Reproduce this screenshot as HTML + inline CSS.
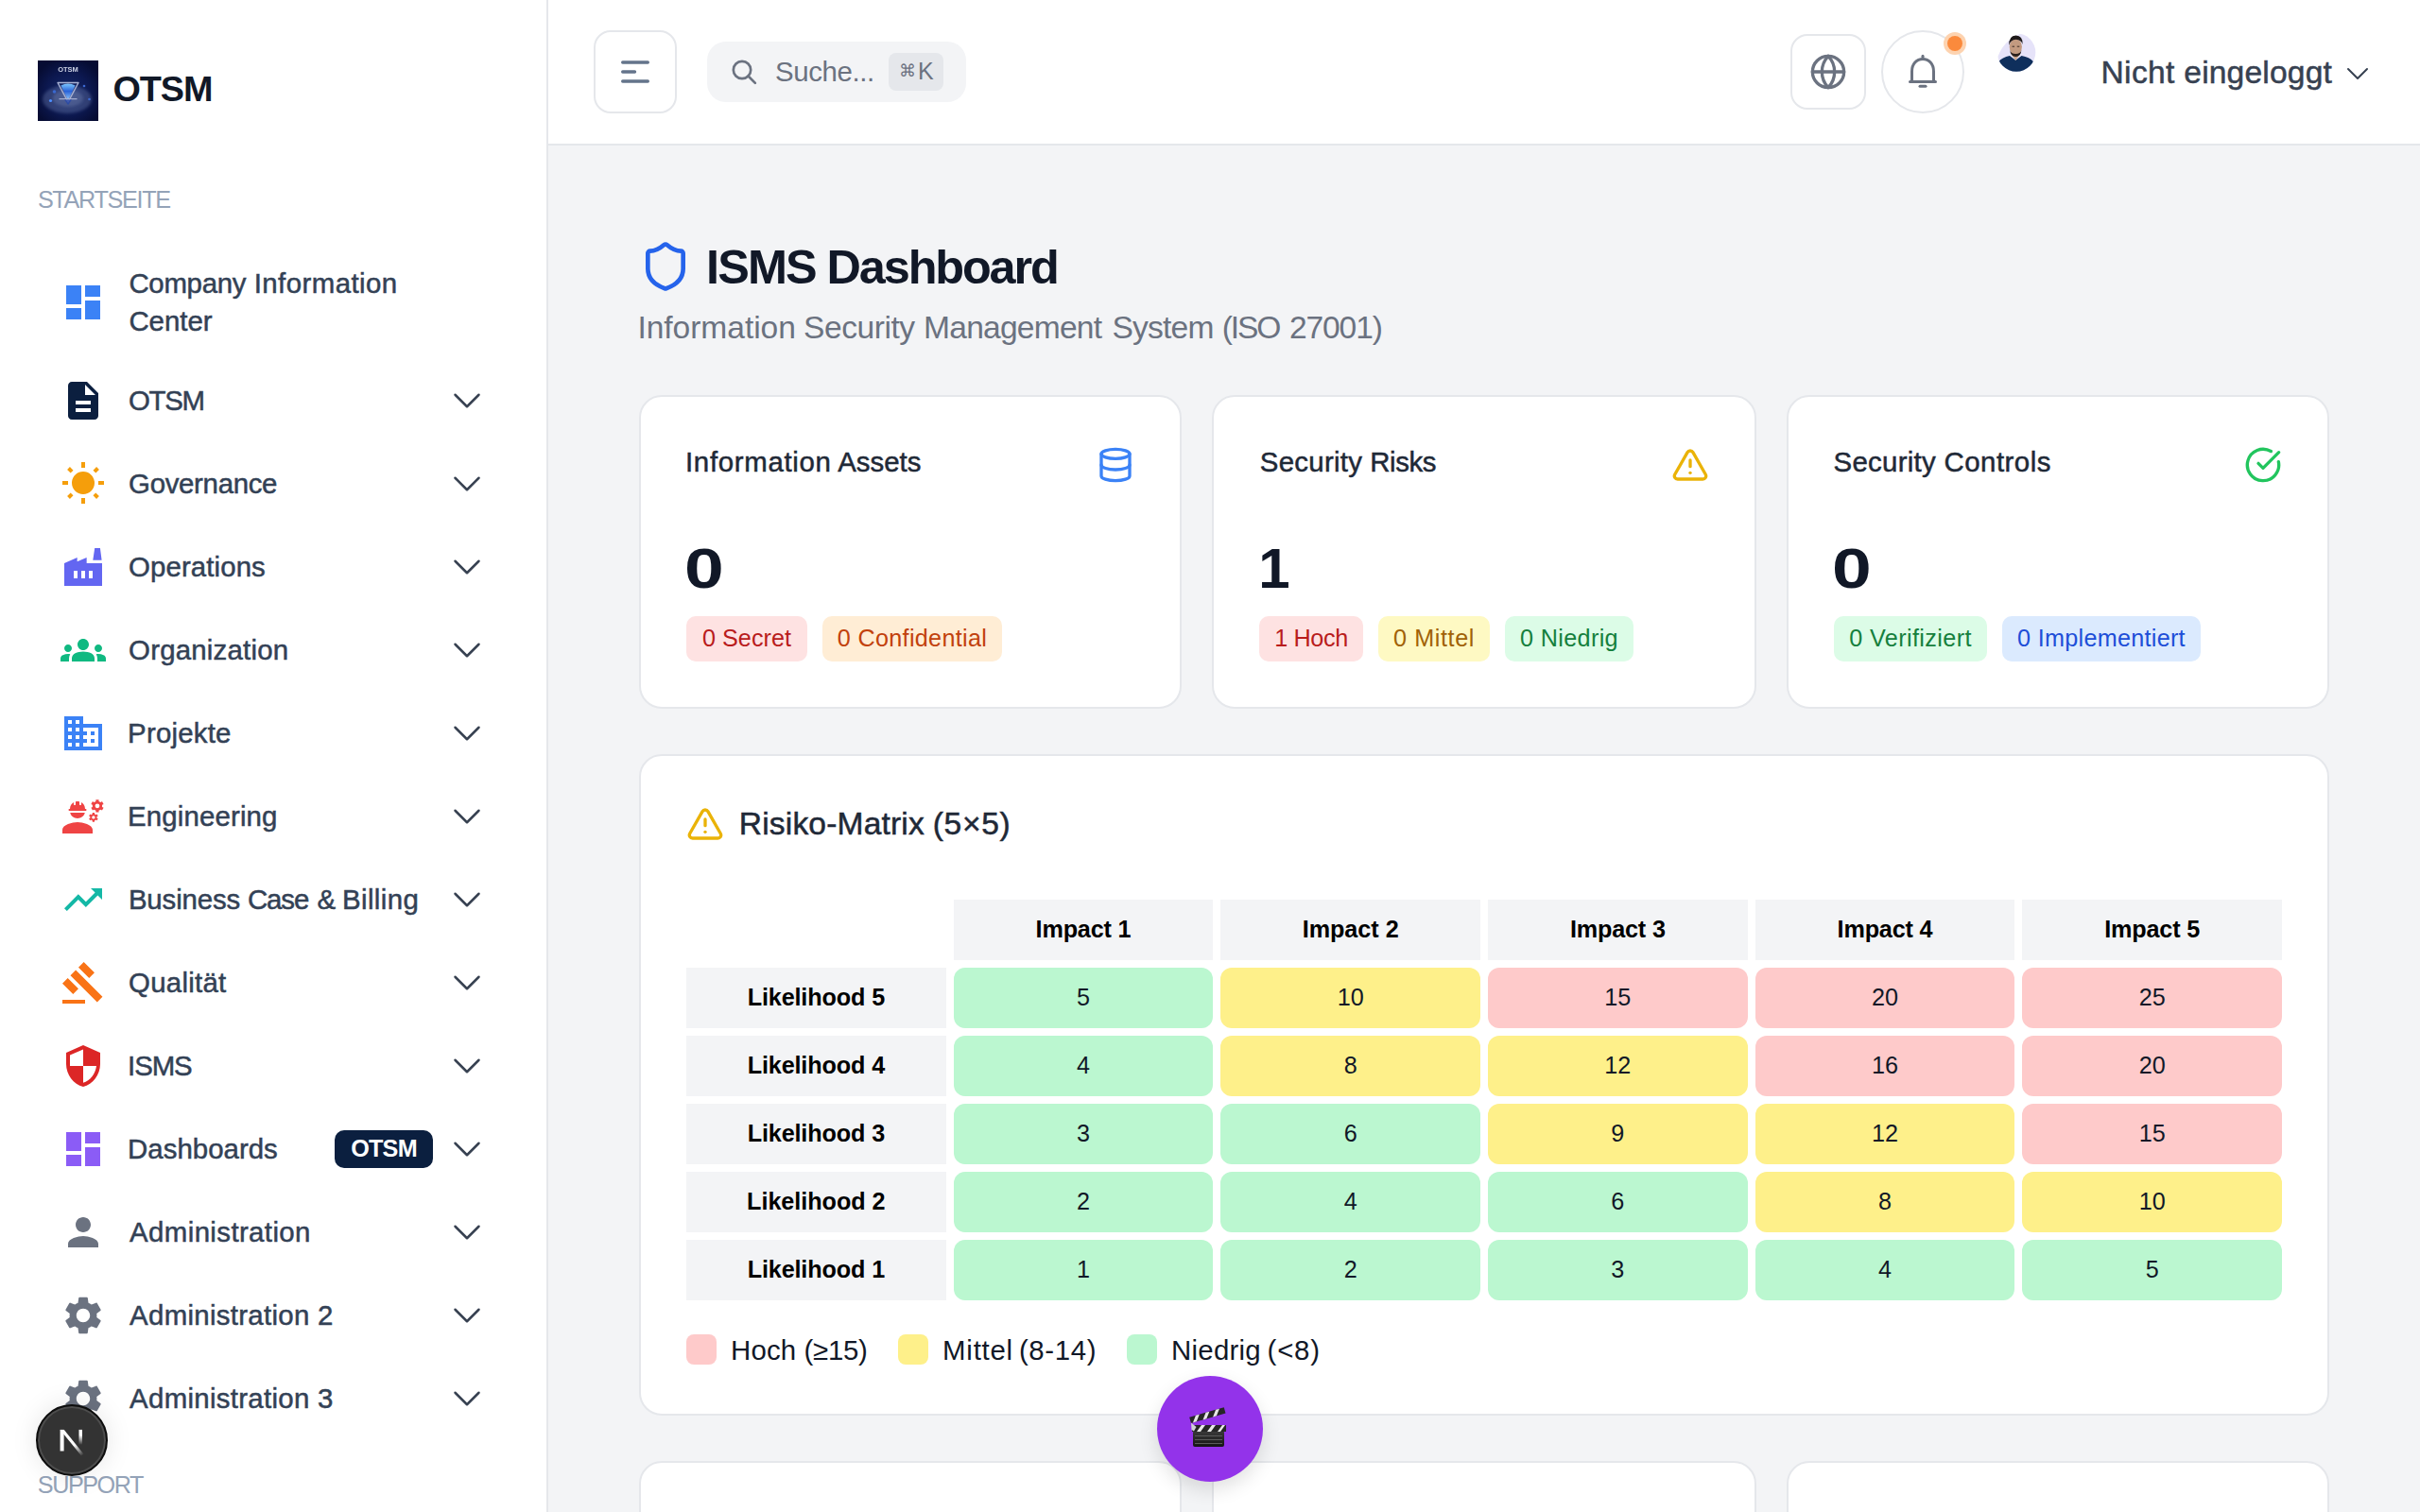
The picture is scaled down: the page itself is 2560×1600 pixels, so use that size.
<!DOCTYPE html>
<html><head><meta charset="utf-8">
<style>
*{box-sizing:border-box;margin:0;padding:0}
html,body{width:2560px;height:1600px;overflow:hidden;background:#f3f4f6;font-family:"Liberation Sans",sans-serif;}
.abs{position:absolute}
.t{position:absolute;white-space:nowrap;line-height:1}
.card{position:absolute;background:#fff;border:2px solid #e5e7eb;border-radius:24px}
.bd{position:absolute;height:48px;border-radius:10px}
.cell{position:absolute;height:64px}
</style></head><body>

<div class="abs" style="left:0;top:0;width:580px;height:1600px;background:#fff;border-right:2px solid #e5e7eb"></div>
<svg class="abs" style="left:40px;top:64px" width="64" height="64" viewBox="0 0 64 64">
<defs>
<radialGradient id="lg" cx="50%" cy="55%" r="60%"><stop offset="0" stop-color="#15286a"/><stop offset="0.6" stop-color="#0c1850"/><stop offset="1" stop-color="#060c33"/></radialGradient>
<linearGradient id="lv" x1="0" y1="0" x2="0" y2="1"><stop offset="0" stop-color="#7cc8ff"/><stop offset="0.45" stop-color="#2a63d8"/><stop offset="1" stop-color="#9cd2ff"/></linearGradient>
<filter id="bl" x="-20%" y="-20%" width="140%" height="140%"><feGaussianBlur stdDeviation="1.6"/></filter>
<filter id="bl2"><feGaussianBlur stdDeviation="0.5"/></filter>
</defs>
<rect width="64" height="64" fill="url(#lg)"/>
<ellipse cx="31" cy="41" rx="26" ry="15" fill="#7d8fbd" opacity="0.32" filter="url(#bl)"/>
<ellipse cx="32" cy="40" rx="16" ry="9" fill="#9aaad0" opacity="0.22" filter="url(#bl)"/>
<g filter="url(#bl2)">
<text x="32" y="11.5" font-size="7.5" fill="#c9cfe2" text-anchor="middle" font-family="Liberation Sans" font-weight="bold">OTSM</text>
<path d="M24.5 26.5 Q32 22.5 39.5 26.5 L32 42.5 Z" fill="url(#lv)"/>
<path d="M21 23.5 L43 23.5 L32 44 Z" fill="none" stroke="#a9b2d4" stroke-width="1.4" stroke-linejoin="round"/>
<path d="M22.5 40.7 L41.5 40.7" stroke="#a9b2d4" stroke-width="1.2"/><path d="M28 41.5 L36 41.5 L32 47Z" fill="#2446a8" opacity="0.8"/>
<circle cx="13.5" cy="42.5" r="1.6" fill="#4d8fff"/>
<circle cx="17.5" cy="33" r="1.8" fill="#3a68d0"/>
<circle cx="49" cy="27" r="1.3" fill="#3a68d0"/>
<circle cx="54.5" cy="41" r="1.3" fill="#3a68d0"/>
</g>
</svg>
<div class="t" style="left:119.40px;top:75.99px;font-size:37.8px;color:#111827;font-weight:bold;letter-spacing:-1.033px;">OTSM</div>
<div class="t" style="left:39.90px;top:198.96px;font-size:25.2px;color:#94a3b8;letter-spacing:-1.324px;">STARTSEITE</div>
<div class="t" style="left:136.40px;top:285.11px;font-size:29.4px;color:#334155;letter-spacing:-0.282px;-webkit-text-stroke:0.5px #334155;">Company</div>
<div class="t" style="left:268.70px;top:285.11px;font-size:29.4px;color:#334155;letter-spacing:0.442px;-webkit-text-stroke:0.5px #334155;">Information</div>
<div class="t" style="left:136.40px;top:325.11px;font-size:29.4px;color:#334155;letter-spacing:-0.006px;-webkit-text-stroke:0.5px #334155;">Center</div>
<div class="t" style="left:136.10px;top:409.11px;font-size:29.4px;color:#334155;letter-spacing:-1.372px;-webkit-text-stroke:0.5px #334155;">OTSM</div>
<div class="t" style="left:136.10px;top:497.11px;font-size:29.4px;color:#334155;letter-spacing:-0.307px;-webkit-text-stroke:0.5px #334155;">Governance</div>
<div class="t" style="left:136.10px;top:585.11px;font-size:29.4px;color:#334155;letter-spacing:0.103px;-webkit-text-stroke:0.5px #334155;">Operations</div>
<div class="t" style="left:136.10px;top:673.11px;font-size:29.4px;color:#334155;letter-spacing:0.209px;-webkit-text-stroke:0.5px #334155;">Organization</div>
<div class="t" style="left:135.10px;top:761.11px;font-size:29.4px;color:#334155;letter-spacing:0.218px;-webkit-text-stroke:0.5px #334155;">Projekte</div>
<div class="t" style="left:135.10px;top:849.11px;font-size:29.4px;color:#334155;letter-spacing:0.148px;-webkit-text-stroke:0.5px #334155;">Engineering</div>
<div class="t" style="left:135.90px;top:937.11px;font-size:29.4px;color:#334155;letter-spacing:-0.123px;-webkit-text-stroke:0.5px #334155;">Business</div>
<div class="t" style="left:261.90px;top:937.11px;font-size:29.4px;color:#334155;letter-spacing:-1.055px;-webkit-text-stroke:0.5px #334155;">Case</div>
<div class="t" style="left:335.50px;top:937.11px;font-size:29.4px;color:#334155;-webkit-text-stroke:0.5px #334155;">&amp;</div>
<div class="t" style="left:362.00px;top:937.11px;font-size:29.4px;color:#334155;letter-spacing:0.389px;-webkit-text-stroke:0.5px #334155;">Billing</div>
<div class="t" style="left:136.10px;top:1025.11px;font-size:29.4px;color:#334155;letter-spacing:0.268px;-webkit-text-stroke:0.5px #334155;">Qualität</div>
<div class="t" style="left:135.10px;top:1113.11px;font-size:29.4px;color:#334155;letter-spacing:-1.084px;-webkit-text-stroke:0.5px #334155;">ISMS</div>
<div class="t" style="left:135.10px;top:1201.11px;font-size:29.4px;color:#334155;letter-spacing:0.024px;-webkit-text-stroke:0.5px #334155;">Dashboards</div>
<div class="t" style="left:137.10px;top:1289.11px;font-size:29.4px;color:#334155;letter-spacing:0.394px;-webkit-text-stroke:0.5px #334155;">Administration</div>
<div class="t" style="left:137.10px;top:1377.11px;font-size:29.4px;color:#334155;letter-spacing:0.308px;-webkit-text-stroke:0.5px #334155;">Administration 2</div>
<div class="t" style="left:137.10px;top:1465.11px;font-size:29.4px;color:#334155;letter-spacing:0.308px;-webkit-text-stroke:0.5px #334155;">Administration 3</div>
<svg class="abs" style="left:474px;top:404px;" width="40" height="40" viewBox="0 0 24 24"><path d="m19.5 8.25-7.5 7.5-7.5-7.5" fill="none" stroke="#374151" stroke-width="1.5" stroke-linecap="round" stroke-linejoin="round"/></svg>
<svg class="abs" style="left:474px;top:492px;" width="40" height="40" viewBox="0 0 24 24"><path d="m19.5 8.25-7.5 7.5-7.5-7.5" fill="none" stroke="#374151" stroke-width="1.5" stroke-linecap="round" stroke-linejoin="round"/></svg>
<svg class="abs" style="left:474px;top:580px;" width="40" height="40" viewBox="0 0 24 24"><path d="m19.5 8.25-7.5 7.5-7.5-7.5" fill="none" stroke="#374151" stroke-width="1.5" stroke-linecap="round" stroke-linejoin="round"/></svg>
<svg class="abs" style="left:474px;top:668px;" width="40" height="40" viewBox="0 0 24 24"><path d="m19.5 8.25-7.5 7.5-7.5-7.5" fill="none" stroke="#374151" stroke-width="1.5" stroke-linecap="round" stroke-linejoin="round"/></svg>
<svg class="abs" style="left:474px;top:756px;" width="40" height="40" viewBox="0 0 24 24"><path d="m19.5 8.25-7.5 7.5-7.5-7.5" fill="none" stroke="#374151" stroke-width="1.5" stroke-linecap="round" stroke-linejoin="round"/></svg>
<svg class="abs" style="left:474px;top:844px;" width="40" height="40" viewBox="0 0 24 24"><path d="m19.5 8.25-7.5 7.5-7.5-7.5" fill="none" stroke="#374151" stroke-width="1.5" stroke-linecap="round" stroke-linejoin="round"/></svg>
<svg class="abs" style="left:474px;top:932px;" width="40" height="40" viewBox="0 0 24 24"><path d="m19.5 8.25-7.5 7.5-7.5-7.5" fill="none" stroke="#374151" stroke-width="1.5" stroke-linecap="round" stroke-linejoin="round"/></svg>
<svg class="abs" style="left:474px;top:1020px;" width="40" height="40" viewBox="0 0 24 24"><path d="m19.5 8.25-7.5 7.5-7.5-7.5" fill="none" stroke="#374151" stroke-width="1.5" stroke-linecap="round" stroke-linejoin="round"/></svg>
<svg class="abs" style="left:474px;top:1108px;" width="40" height="40" viewBox="0 0 24 24"><path d="m19.5 8.25-7.5 7.5-7.5-7.5" fill="none" stroke="#374151" stroke-width="1.5" stroke-linecap="round" stroke-linejoin="round"/></svg>
<svg class="abs" style="left:474px;top:1196px;" width="40" height="40" viewBox="0 0 24 24"><path d="m19.5 8.25-7.5 7.5-7.5-7.5" fill="none" stroke="#374151" stroke-width="1.5" stroke-linecap="round" stroke-linejoin="round"/></svg>
<svg class="abs" style="left:474px;top:1284px;" width="40" height="40" viewBox="0 0 24 24"><path d="m19.5 8.25-7.5 7.5-7.5-7.5" fill="none" stroke="#374151" stroke-width="1.5" stroke-linecap="round" stroke-linejoin="round"/></svg>
<svg class="abs" style="left:474px;top:1372px;" width="40" height="40" viewBox="0 0 24 24"><path d="m19.5 8.25-7.5 7.5-7.5-7.5" fill="none" stroke="#374151" stroke-width="1.5" stroke-linecap="round" stroke-linejoin="round"/></svg>
<svg class="abs" style="left:474px;top:1460px;" width="40" height="40" viewBox="0 0 24 24"><path d="m19.5 8.25-7.5 7.5-7.5-7.5" fill="none" stroke="#374151" stroke-width="1.5" stroke-linecap="round" stroke-linejoin="round"/></svg>
<svg class="abs" style="left:64px;top:296px;" width="48" height="48" viewBox="0 0 24 24"><path d="M3 13h8V3H3v10zm0 8h8v-6H3v6zm10 0h8V11h-8v10zm0-18v6h8V3h-8z" fill="#3b82f6" /></svg>
<svg class="abs" style="left:64px;top:400px;" width="48" height="48" viewBox="0 0 24 24"><path d="M14 2H6c-1.1 0-1.99.9-1.99 2L4 20c0 1.1.89 2 1.99 2H18c1.1 0 2-.9 2-2V8l-6-6zm2 16H8v-2h8v2zm0-4H8v-2h8v2zm-3-5V3.5L18.5 9H13z" fill="#0b1f3f" /></svg>
<svg class="abs" style="left:64px;top:488px;" width="48" height="48" viewBox="0 0 24 24"><path d="M6.76 4.84l-1.8-1.79-1.41 1.41 1.79 1.79 1.42-1.41zM4 10.5H1v2h3v-2zm9-9.95h-2V3.5h2V.55zm7.45 3.91l-1.41-1.41-1.79 1.79 1.41 1.41 1.79-1.79zm-3.21 13.7l1.79 1.8 1.41-1.41-1.8-1.79-1.4 1.4zM20 10.5v2h3v-2h-3zm-8-5c-3.31 0-6 2.69-6 6s2.69 6 6 6 6-2.69 6-6-2.69-6-6-6zm-1 16.95h2V19.5h-2v2.95zm-7.45-3.91l1.41 1.41 1.79-1.8-1.41-1.41-1.79 1.8z" fill="#f59e0b" /></svg>
<svg class="abs" style="left:64px;top:576px;" width="48" height="48" viewBox="0 0 24 24"><path d="M2 22V10l6.83-3v2.1l5-2.1V10H22V22z M7 14h2v4H7z M11 14h2v4h-2z M15 14h2v4h-2z M18.1 2h2.86l.84 6.35h-4.65z" fill="#6366f1" fill-rule="evenodd"/></svg>
<svg class="abs" style="left:64px;top:664px;" width="48" height="48" viewBox="0 0 24 24"><path d="M12 12.75c1.63 0 3.07.39 4.24.9 1.08.48 1.76 1.56 1.76 2.73V18H6v-1.61c0-1.18.68-2.26 1.76-2.73 1.17-.52 2.61-.91 4.24-.91zM4 13c1.1 0 2-.9 2-2s-.9-2-2-2-2 .9-2 2 .9 2 2 2zm1.13 1.1c-.37-.06-.74-.1-1.13-.1-.99 0-1.93.21-2.78.58C.48 14.9 0 15.62 0 16.43V18h4.5v-1.61c0-.83.23-1.61.63-2.29zM20 13c1.1 0 2-.9 2-2s-.9-2-2-2-2 .9-2 2 .9 2 2 2zm4 3.43c0-.81-.48-1.53-1.22-1.85-.85-.37-1.79-.58-2.78-.58-.39 0-.76.04-1.13.1.4.68.63 1.46.63 2.29V18H24v-1.57zM12 6c1.66 0 3 1.34 3 3s-1.34 3-3 3-3-1.34-3-3 1.34-3 3-3z" fill="#10b981" /></svg>
<svg class="abs" style="left:64px;top:752px;" width="48" height="48" viewBox="0 0 24 24"><path d="M12 7V3H2v18h20V7H12zM6 19H4v-2h2v2zm0-4H4v-2h2v2zm0-4H4V9h2v2zm0-4H4V5h2v2zm4 12H8v-2h2v2zm0-4H8v-2h2v2zm0-4H8V9h2v2zm0-4H8V5h2v2zm10 12h-8v-2h2v-2h-2v-2h2v-2h-2V9h8v10zm-2-8h-2v2h2v-2zm0 4h-2v2h2v-2z" fill="#3b82f6" /></svg>
<svg class="abs" style="left:64px;top:840px;" width="48" height="48" viewBox="0 0 24 24"><path d="M9 15c-2.67 0-8 1.34-8 4v2h16v-2c0-2.66-5.33-4-8-4z M4.74 8.95h8.52c.27 0 .49-.22.49-.49v-.02c0-.27-.22-.49-.49-.49H13c0-1.48-.81-2.75-2-3.45v.95c0 .28-.22.5-.5.5s-.5-.22-.5-.5V4.14C9.68 4.06 9.35 4 9 4s-.68.06-1 .14V5.5c0 .28-.22.5-.5.5S7 5.78 7 5.5v-.95C5.81 5.25 5 6.52 5 8h-.26c-.27 0-.49.22-.49.49v.03c0 .26.22.48.49.48z M5.1 10h7.8c-.4 1.75-2 2.95-3.9 2.95s-3.5-1.2-3.9-2.95z M18.73 3.94 L18.67 3.08 L20.29 3.08 L20.23 3.94 L21.26 4.53 L21.98 4.06 L22.79 5.45 L22.01 5.84 L22.01 7.02 L22.79 7.41 L21.98 8.80 L21.26 8.33 L20.23 8.92 L20.29 9.78 L18.67 9.78 L18.73 8.92 L17.70 8.33 L16.98 8.80 L16.17 7.41 L16.95 7.02 L16.95 5.84 L16.17 5.45 L16.98 4.06 L17.70 4.53Z M20.68 6.43 A1.2 1.2 0 1 0 18.28 6.43 A1.2 1.2 0 1 0 20.68 6.43Z M16.91 10.68 L16.87 10.02 L18.03 10.02 L17.99 10.68 L18.71 11.10 L19.26 10.73 L19.85 11.74 L19.25 12.03 L19.25 12.87 L19.85 13.16 L19.26 14.17 L18.71 13.80 L17.99 14.22 L18.03 14.88 L16.87 14.88 L16.91 14.22 L16.19 13.80 L15.64 14.17 L15.05 13.16 L15.65 12.87 L15.65 12.03 L15.05 11.74 L15.64 10.73 L16.19 11.10Z M18.30 12.45 A0.85 0.85 0 1 0 16.60 12.45 A0.85 0.85 0 1 0 18.30 12.45Z" fill="#ef4444" fill-rule="evenodd"/></svg>
<svg class="abs" style="left:64px;top:928px;" width="48" height="48" viewBox="0 0 24 24"><path d="M16 6l2.29 2.29-4.88 4.88-4-4L2 16.59 3.41 18l6-6 4 4 6.3-6.29L22 12V6z" fill="#14b8a6" /></svg>
<svg class="abs" style="left:64px;top:1016px;" width="48" height="48" viewBox="0 0 24 24"><path d="M1 21h12v2H1zM5.245 8.07l2.83-2.827 14.14 14.142-2.828 2.828zM12.317 1l5.657 5.656-2.83 2.83-5.654-5.66zM3.825 9.485l5.657 5.657-2.828 2.828-5.657-5.657z" fill="#f97316" /></svg>
<svg class="abs" style="left:64px;top:1104px;" width="48" height="48" viewBox="0 0 24 24"><path d="M12 1L3 5v6c0 5.55 3.84 10.74 9 12 5.16-1.26 9-6.45 9-12V5l-9-4zm0 10.99h7c-.53 4.12-3.28 7.79-7 8.94V12H5V6.3l7-3.11v8.8z" fill="#dc2626" /></svg>
<svg class="abs" style="left:64px;top:1192px;" width="48" height="48" viewBox="0 0 24 24"><path d="M3 13h8V3H3v10zm0 8h8v-6H3v6zm10 0h8V11h-8v10zm0-18v6h8V3h-8z" fill="#8b5cf6" /></svg>
<svg class="abs" style="left:64px;top:1280px;" width="48" height="48" viewBox="0 0 24 24"><path d="M12 12c2.21 0 4-1.79 4-4s-1.79-4-4-4-4 1.79-4 4 1.79 4 4 4zm0 2c-2.67 0-8 1.34-8 4v2h16v-2c0-2.66-5.33-4-8-4z" fill="#6b7280" /></svg>
<svg class="abs" style="left:64px;top:1368px;" width="48" height="48" viewBox="0 0 24 24"><path d="M19.14 12.94c.04-.3.06-.61.06-.94 0-.32-.02-.64-.07-.94l2.03-1.58c.18-.14.23-.41.12-.61l-1.92-3.32c-.12-.22-.37-.29-.59-.22l-2.39.96c-.5-.38-1.03-.7-1.62-.94l-.36-2.54c-.04-.24-.24-.41-.48-.41h-3.84c-.24 0-.43.17-.47.41l-.36 2.54c-.59.24-1.13.57-1.62.94l-2.39-.96c-.22-.08-.47 0-.59.22L2.74 8.87c-.12.21-.08.47.12.61l2.03 1.58c-.05.3-.09.63-.09.94s.02.64.07.94l-2.03 1.58c-.18.14-.23.41-.12.61l1.92 3.32c.12.22.37.29.59.22l2.39-.96c.5.38 1.03.7 1.62.94l.36 2.54c.05.24.24.41.48.41h3.84c.24 0 .44-.17.47-.41l.36-2.54c.59-.24 1.13-.56 1.62-.94l2.39.96c.22.08.47 0 .59-.22l1.92-3.32c.12-.22.07-.47-.12-.61l-2.01-1.58zM12 15.6c-1.98 0-3.6-1.62-3.6-3.6s1.62-3.6 3.6-3.6 3.6 1.62 3.6 3.6-1.62 3.6-3.6 3.6z" fill="#6b7280" /></svg>
<svg class="abs" style="left:64px;top:1456px;" width="48" height="48" viewBox="0 0 24 24"><path d="M19.14 12.94c.04-.3.06-.61.06-.94 0-.32-.02-.64-.07-.94l2.03-1.58c.18-.14.23-.41.12-.61l-1.92-3.32c-.12-.22-.37-.29-.59-.22l-2.39.96c-.5-.38-1.03-.7-1.62-.94l-.36-2.54c-.04-.24-.24-.41-.48-.41h-3.84c-.24 0-.43.17-.47.41l-.36 2.54c-.59.24-1.13.57-1.62.94l-2.39-.96c-.22-.08-.47 0-.59.22L2.74 8.87c-.12.21-.08.47.12.61l2.03 1.58c-.05.3-.09.63-.09.94s.02.64.07.94l-2.03 1.58c-.18.14-.23.41-.12.61l1.92 3.32c.12.22.37.29.59.22l2.39-.96c.5.38 1.03.7 1.62.94l.36 2.54c.05.24.24.41.48.41h3.84c.24 0 .44-.17.47-.41l.36-2.54c.59-.24 1.13-.56 1.62-.94l2.39.96c.22.08.47 0 .59-.22l1.92-3.32c.12-.22.07-.47-.12-.61l-2.01-1.58zM12 15.6c-1.98 0-3.6-1.62-3.6-3.6s1.62-3.6 3.6-3.6 3.6 1.62 3.6 3.6-1.62 3.6-3.6 3.6z" fill="#6b7280" /></svg>
<div class="abs" style="left:354px;top:1196px;width:104px;height:40px;border-radius:10px;background:#0b1f3f"></div>
<div class="t" style="left:371.14px;top:1202.96px;font-size:25.2px;color:#ffffff;font-weight:bold;letter-spacing:-0.759px;">OTSM</div>
<div class="t" style="left:39.80px;top:1558.66px;font-size:25.2px;color:#94a3b8;letter-spacing:-1.453px;">SUPPORT</div>
<div class="abs" style="left:580px;top:0;width:1980px;height:154px;background:#fff;border-bottom:2px solid #e5e7eb"></div>
<div class="abs" style="left:628px;top:32px;width:88px;height:88px;border:2px solid #e5e7eb;border-radius:18px"></div>
<svg class="abs" style="left:652px;top:56px" width="40" height="40" viewBox="0 0 40 40"><path d="M6.7 10H33.3M6.7 20H19.5M6.7 30H33.3" stroke="#64748b" stroke-width="3.4" stroke-linecap="round" fill="none"/></svg>
<div class="abs" style="left:748px;top:44px;width:274px;height:64px;border-radius:20px;background:#f3f4f6"></div>
<svg class="abs" style="left:771px;top:59.5px" width="32" height="32" viewBox="0 0 24 24"><circle cx="10.5" cy="10.5" r="6.9" stroke="#6b7280" stroke-width="2" fill="none"/><path d="M15.4 15.4L20.9 20.9" stroke="#6b7280" stroke-width="2" stroke-linecap="round"/></svg>
<div class="t" style="left:820.00px;top:61.11px;font-size:29.4px;color:#6b7280;letter-spacing:-0.381px;">Suche...</div>
<div class="abs" style="left:940px;top:56px;width:58px;height:40px;border-radius:8px;background:#e5e7eb"></div>
<div class="t" style="left:951.00px;top:66.26px;font-size:18.0px;color:#6b7280;">⌘</div>
<div class="t" style="left:971.00px;top:62.83px;font-size:25.0px;color:#6b7280;">K</div>
<div class="abs" style="left:1894px;top:36px;width:80px;height:80px;border:2px solid #e5e7eb;border-radius:18px"></div>
<svg class="abs" style="left:1914px;top:56px" width="40" height="40" viewBox="0 0 24 24"><g fill="none" stroke="#6b7280" stroke-width="2" stroke-linecap="round" stroke-linejoin="round"><circle cx="12" cy="12" r="10"/><path d="M12 2a14.5 14.5 0 0 0 0 20 14.5 14.5 0 0 0 0-20"/><path d="M2 12h20"/></g></svg>
<div class="abs" style="left:1990px;top:32px;width:88px;height:88px;border:2px solid #e5e7eb;border-radius:50%"></div>
<svg class="abs" style="left:2014px;top:56px" width="40" height="40" viewBox="0 0 40 40"><g fill="none" stroke="#6b7280" stroke-width="3" stroke-linecap="round" stroke-linejoin="round"><path d="M8.5 30.5V19.5C8.5 11.5 13.5 6.5 20 6.5S31.5 11.5 31.5 19.5V30.5"/><path d="M6.5 30.5H33.5"/><path d="M17 35.3H23"/><path d="M20 3.2V5.5"/></g></svg>
<div class="abs" style="left:2056px;top:34px;width:24px;height:24px;border-radius:50%;background:#fdd3b0"></div>
<div class="abs" style="left:2060px;top:38px;width:16px;height:16px;border-radius:50%;background:#fb8a3c"></div>
<svg class="abs" style="left:2108px;top:30px" width="50" height="50" viewBox="0 0 50 50">
<defs><clipPath id="av"><circle cx="25" cy="25.5" r="20.3"/></clipPath></defs>
<g clip-path="url(#av)">
<rect width="50" height="50" fill="#ffffff"/>
<path d="M4.3 33.7 Q10 12 33.3 4.1 L50 0 L50 50 L0 50Z" fill="#e6e3f9"/>
<path d="M3 50 L5.9 35.7 Q10 30.5 18 29 L24.2 33.7 L30.5 29 Q39 30.5 43 35.3 L47 50Z" fill="#0f2f5c"/>
<path d="M19.5 27 L24.2 34 L29.2 27 L29.2 24 L19.5 24Z" fill="#c9a48a"/>
<ellipse cx="24.3" cy="19.5" rx="6.6" ry="8.6" fill="#c29a80"/>
<path d="M17.3 18 Q16.8 8 24.5 7.6 Q32 7.8 31.6 17 Q30.2 12.2 24.5 11.8 Q18.8 12 17.3 18Z" fill="#1e1a1a"/>
<path d="M18.2 23 Q18.8 29.8 24.3 29.9 Q29.8 29.8 30.4 23 Q29.4 26.8 24.3 27 Q19.2 26.8 18.2 23Z" fill="#2a201c"/>
<path d="M20.5 19.2h2.5M25.8 19.2h2.5" stroke="#3a2a25" stroke-width="1"/>
</g></svg>
<div class="t" style="left:2222.50px;top:59.55px;font-size:33.6px;color:#374151;letter-spacing:0.357px;-webkit-text-stroke:0.5px #374151;">Nicht</div>
<div class="t" style="left:2310.30px;top:59.55px;font-size:33.6px;color:#374151;letter-spacing:0.173px;-webkit-text-stroke:0.5px #374151;">eingeloggt</div>
<svg class="abs" style="left:2478px;top:62px;" width="32" height="32" viewBox="0 0 24 24"><path d="m19.5 8.25-7.5 7.5-7.5-7.5" fill="none" stroke="#374151" stroke-width="1.5" stroke-linecap="round" stroke-linejoin="round"/></svg>
<svg class="abs" style="left:676px;top:254px;" width="56" height="56" viewBox="0 0 24 24"><path d="M20 13c0 5-3.5 7.5-7.66 8.95a1 1 0 0 1-.67-.01C7.5 20.5 4 18 4 13V6a1 1 0 0 1 1-1c2 0 4.5-1.2 6.24-2.72a1.17 1.17 0 0 1 1.52 0C14.51 3.81 17 5 19 5a1 1 0 0 1 1 1z" fill="none" stroke="#2563eb" stroke-width="2" stroke-linecap="round" stroke-linejoin="round"/></svg>
<div class="t" style="left:747.00px;top:257.73px;font-size:50.4px;color:#111827;font-weight:bold;letter-spacing:-1.862px;">ISMS</div>
<div class="t" style="left:874.60px;top:257.73px;font-size:50.4px;color:#111827;font-weight:bold;letter-spacing:-2.127px;">Dashboard</div>
<div class="t" style="left:674.40px;top:329.55px;font-size:33.6px;color:#6b7280;letter-spacing:-0.050px;">Information</div>
<div class="t" style="left:850.00px;top:329.55px;font-size:33.6px;color:#6b7280;letter-spacing:-0.458px;">Security</div>
<div class="t" style="left:977.10px;top:329.55px;font-size:33.6px;color:#6b7280;letter-spacing:-0.785px;">Management</div>
<div class="t" style="left:1176.40px;top:329.55px;font-size:33.6px;color:#6b7280;letter-spacing:-0.796px;">System</div>
<div class="t" style="left:1292.80px;top:329.55px;font-size:33.6px;color:#6b7280;letter-spacing:-2.136px;">(ISO</div>
<div class="t" style="left:1364.00px;top:329.55px;font-size:33.6px;color:#6b7280;letter-spacing:-1.135px;">27001)</div>
<div class="card" style="left:676px;top:418px;width:574px;height:332px"></div>
<div class="card" style="left:1282px;top:418px;width:576px;height:332px"></div>
<div class="card" style="left:1890px;top:418px;width:574px;height:332px"></div>
<div class="t" style="left:725.00px;top:473.61px;font-size:29.4px;color:#1f2937;letter-spacing:0.682px;-webkit-text-stroke:0.5px #1f2937;">Information</div>
<div class="t" style="left:886.25px;top:473.61px;font-size:29.4px;color:#1f2937;letter-spacing:-0.001px;-webkit-text-stroke:0.5px #1f2937;">Assets</div>
<div class="t" style="left:1332.75px;top:473.61px;font-size:29.4px;color:#1f2937;letter-spacing:0.290px;-webkit-text-stroke:0.5px #1f2937;">Security</div>
<div class="t" style="left:1449.25px;top:473.61px;font-size:29.4px;color:#1f2937;letter-spacing:-0.411px;-webkit-text-stroke:0.5px #1f2937;">Risks</div>
<div class="t" style="left:1939.50px;top:473.61px;font-size:29.4px;color:#1f2937;letter-spacing:0.290px;-webkit-text-stroke:0.5px #1f2937;">Security</div>
<div class="t" style="left:2056.50px;top:473.61px;font-size:29.4px;color:#1f2937;letter-spacing:0.501px;-webkit-text-stroke:0.5px #1f2937;">Controls</div>
<svg class="abs" style="left:1160px;top:472px;" width="40" height="40" viewBox="0 0 24 24"><g fill="none" stroke="#3b82f6" stroke-width="2" stroke-linecap="round" stroke-linejoin="round"><ellipse cx="12" cy="5" rx="9" ry="3"/><path d="M3 5V19A9 3 0 0 0 21 19V5"/><path d="M3 12A9 3 0 0 0 21 12"/></g></svg>
<svg class="abs" style="left:1768px;top:472px;" width="40" height="40" viewBox="0 0 24 24"><g fill="none" stroke="#eab308" stroke-width="2" stroke-linecap="round" stroke-linejoin="round"><path d="m21.73 18-8-14a2 2 0 0 0-3.48 0l-8 14A2 2 0 0 0 4 21h16a2 2 0 0 0 1.73-3"/><path d="M12 9v4"/><path d="M12 17h.01"/></g></svg>
<svg class="abs" style="left:2374px;top:472px;" width="40" height="40" viewBox="0 0 24 24"><g fill="none" stroke="#22c55e" stroke-width="2" stroke-linecap="round" stroke-linejoin="round"><path d="M21.801 10A10 10 0 1 1 17 3.335"/><path d="m9 11 3 3L22 4"/></g></svg>
<div class="t" style="left:724.00px;top:571.70px;font-size:60.0px;color:#111827;font-weight:bold;transform:scaleX(1.25);transform-origin:0 0;">0</div>
<div class="t" style="left:1331.25px;top:571.70px;font-size:60.0px;color:#111827;font-weight:bold;transform:scaleX(1.0);transform-origin:0 0;">1</div>
<div class="t" style="left:1937.75px;top:571.70px;font-size:60.0px;color:#111827;font-weight:bold;transform:scaleX(1.25);transform-origin:0 0;">0</div>
<div class="bd" style="left:726px;top:652px;width:128px;background:#fee2e2"></div>
<div class="t" style="left:742.99px;top:663.16px;font-size:25.2px;color:#b91c1c;letter-spacing:0.028px;">0 Secret</div>
<div class="bd" style="left:870px;top:652px;width:190px;background:#ffedd5"></div>
<div class="t" style="left:885.80px;top:663.16px;font-size:25.2px;color:#c2410c;letter-spacing:0.313px;">0 Confidential</div>
<div class="bd" style="left:1332px;top:652px;width:110px;background:#fee2e2"></div>
<div class="t" style="left:1348.18px;top:663.16px;font-size:25.2px;color:#b91c1c;letter-spacing:-0.359px;">1 Hoch</div>
<div class="bd" style="left:1458px;top:652px;width:118px;background:#fef9c3"></div>
<div class="t" style="left:1473.89px;top:663.16px;font-size:25.2px;color:#a16207;letter-spacing:0.630px;">0 Mittel</div>
<div class="bd" style="left:1592px;top:652px;width:136px;background:#dcfce7"></div>
<div class="t" style="left:1608.08px;top:663.16px;font-size:25.2px;color:#15803d;letter-spacing:0.339px;">0 Niedrig</div>
<div class="bd" style="left:1940px;top:652px;width:162px;background:#dcfce7"></div>
<div class="t" style="left:1956.18px;top:663.16px;font-size:25.2px;color:#15803d;letter-spacing:0.389px;">0 Verifiziert</div>
<div class="bd" style="left:2118px;top:652px;width:210px;background:#dbeafe"></div>
<div class="t" style="left:2134.11px;top:663.16px;font-size:25.2px;color:#1d4ed8;letter-spacing:0.280px;">0 Implementiert</div>
<div class="card" style="left:676px;top:798px;width:1788px;height:700px"></div>
<svg class="abs" style="left:726px;top:852px;" width="40" height="40" viewBox="0 0 24 24"><g fill="none" stroke="#eab308" stroke-width="2" stroke-linecap="round" stroke-linejoin="round"><path d="m21.73 18-8-14a2 2 0 0 0-3.48 0l-8 14A2 2 0 0 0 4 21h16a2 2 0 0 0 1.73-3"/><path d="M12 9v4"/><path d="M12 17h.01"/></g></svg>
<div class="t" style="left:781.75px;top:855.30px;font-size:33.6px;color:#1f2937;letter-spacing:0.169px;-webkit-text-stroke:0.5px #1f2937;">Risiko-Matrix</div>
<div class="t" style="left:986.75px;top:855.30px;font-size:33.6px;color:#1f2937;letter-spacing:0.653px;-webkit-text-stroke:0.5px #1f2937;">(5×5)</div>
<div class="cell" style="left:1008.67px;top:952px;width:274.67px;background:#f3f4f6"></div>
<div class="t" style="left:1095.58px;top:971.16px;font-size:25.2px;color:#000;font-weight:bold;letter-spacing:-0.169px;">Impact 1</div>
<div class="cell" style="left:1291.33px;top:952px;width:274.67px;background:#f3f4f6"></div>
<div class="t" style="left:1377.68px;top:971.16px;font-size:25.2px;color:#000;font-weight:bold;letter-spacing:-0.026px;">Impact 2</div>
<div class="cell" style="left:1574.00px;top:952px;width:274.67px;background:#f3f4f6"></div>
<div class="t" style="left:1660.91px;top:971.16px;font-size:25.2px;color:#000;font-weight:bold;letter-spacing:-0.169px;">Impact 3</div>
<div class="cell" style="left:1856.67px;top:952px;width:274.67px;background:#f3f4f6"></div>
<div class="t" style="left:1943.58px;top:971.16px;font-size:25.2px;color:#000;font-weight:bold;letter-spacing:-0.169px;">Impact 4</div>
<div class="cell" style="left:2139.33px;top:952px;width:274.67px;background:#f3f4f6"></div>
<div class="t" style="left:2226.25px;top:971.16px;font-size:25.2px;color:#000;font-weight:bold;letter-spacing:-0.169px;">Impact 5</div>
<div class="cell" style="left:726px;top:1024px;width:274.67px;background:#f3f4f6"></div>
<div class="t" style="left:790.64px;top:1043.16px;font-size:25.2px;color:#000;font-weight:bold;letter-spacing:-0.130px;">Likelihood 5</div>
<div class="cell" style="left:1008.67px;top:1024px;width:274.67px;background:#bbf7d0;border-radius:12px"></div>
<div class="t" style="left:1139.00px;top:1043.16px;font-size:25.2px;color:#111827;">5</div>
<div class="cell" style="left:1291.33px;top:1024px;width:274.67px;background:#fef08a;border-radius:12px"></div>
<div class="t" style="left:1414.66px;top:1043.16px;font-size:25.2px;color:#111827;">10</div>
<div class="cell" style="left:1574.00px;top:1024px;width:274.67px;background:#fecaca;border-radius:12px"></div>
<div class="t" style="left:1697.33px;top:1043.16px;font-size:25.2px;color:#111827;">15</div>
<div class="cell" style="left:1856.67px;top:1024px;width:274.67px;background:#fecaca;border-radius:12px"></div>
<div class="t" style="left:1979.99px;top:1043.16px;font-size:25.2px;color:#111827;">20</div>
<div class="cell" style="left:2139.33px;top:1024px;width:274.67px;background:#fecaca;border-radius:12px"></div>
<div class="t" style="left:2262.66px;top:1043.16px;font-size:25.2px;color:#111827;">25</div>
<div class="cell" style="left:726px;top:1096px;width:274.67px;background:#f3f4f6"></div>
<div class="t" style="left:790.64px;top:1115.16px;font-size:25.2px;color:#000;font-weight:bold;letter-spacing:-0.130px;">Likelihood 4</div>
<div class="cell" style="left:1008.67px;top:1096px;width:274.67px;background:#bbf7d0;border-radius:12px"></div>
<div class="t" style="left:1139.00px;top:1115.16px;font-size:25.2px;color:#111827;">4</div>
<div class="cell" style="left:1291.33px;top:1096px;width:274.67px;background:#fef08a;border-radius:12px"></div>
<div class="t" style="left:1421.66px;top:1115.16px;font-size:25.2px;color:#111827;">8</div>
<div class="cell" style="left:1574.00px;top:1096px;width:274.67px;background:#fef08a;border-radius:12px"></div>
<div class="t" style="left:1697.33px;top:1115.16px;font-size:25.2px;color:#111827;">12</div>
<div class="cell" style="left:1856.67px;top:1096px;width:274.67px;background:#fecaca;border-radius:12px"></div>
<div class="t" style="left:1979.99px;top:1115.16px;font-size:25.2px;color:#111827;">16</div>
<div class="cell" style="left:2139.33px;top:1096px;width:274.67px;background:#fecaca;border-radius:12px"></div>
<div class="t" style="left:2262.66px;top:1115.16px;font-size:25.2px;color:#111827;">20</div>
<div class="cell" style="left:726px;top:1168px;width:274.67px;background:#f3f4f6"></div>
<div class="t" style="left:790.64px;top:1187.16px;font-size:25.2px;color:#000;font-weight:bold;letter-spacing:-0.130px;">Likelihood 3</div>
<div class="cell" style="left:1008.67px;top:1168px;width:274.67px;background:#bbf7d0;border-radius:12px"></div>
<div class="t" style="left:1139.00px;top:1187.16px;font-size:25.2px;color:#111827;">3</div>
<div class="cell" style="left:1291.33px;top:1168px;width:274.67px;background:#bbf7d0;border-radius:12px"></div>
<div class="t" style="left:1421.66px;top:1187.16px;font-size:25.2px;color:#111827;">6</div>
<div class="cell" style="left:1574.00px;top:1168px;width:274.67px;background:#fef08a;border-radius:12px"></div>
<div class="t" style="left:1704.33px;top:1187.16px;font-size:25.2px;color:#111827;">9</div>
<div class="cell" style="left:1856.67px;top:1168px;width:274.67px;background:#fef08a;border-radius:12px"></div>
<div class="t" style="left:1979.99px;top:1187.16px;font-size:25.2px;color:#111827;">12</div>
<div class="cell" style="left:2139.33px;top:1168px;width:274.67px;background:#fecaca;border-radius:12px"></div>
<div class="t" style="left:2262.66px;top:1187.16px;font-size:25.2px;color:#111827;">15</div>
<div class="cell" style="left:726px;top:1240px;width:274.67px;background:#f3f4f6"></div>
<div class="t" style="left:790.10px;top:1259.16px;font-size:25.2px;color:#000;font-weight:bold;letter-spacing:-0.040px;">Likelihood 2</div>
<div class="cell" style="left:1008.67px;top:1240px;width:274.67px;background:#bbf7d0;border-radius:12px"></div>
<div class="t" style="left:1139.00px;top:1259.16px;font-size:25.2px;color:#111827;">2</div>
<div class="cell" style="left:1291.33px;top:1240px;width:274.67px;background:#bbf7d0;border-radius:12px"></div>
<div class="t" style="left:1421.66px;top:1259.16px;font-size:25.2px;color:#111827;">4</div>
<div class="cell" style="left:1574.00px;top:1240px;width:274.67px;background:#bbf7d0;border-radius:12px"></div>
<div class="t" style="left:1704.33px;top:1259.16px;font-size:25.2px;color:#111827;">6</div>
<div class="cell" style="left:1856.67px;top:1240px;width:274.67px;background:#fef08a;border-radius:12px"></div>
<div class="t" style="left:1987.00px;top:1259.16px;font-size:25.2px;color:#111827;">8</div>
<div class="cell" style="left:2139.33px;top:1240px;width:274.67px;background:#fef08a;border-radius:12px"></div>
<div class="t" style="left:2262.66px;top:1259.16px;font-size:25.2px;color:#111827;">10</div>
<div class="cell" style="left:726px;top:1312px;width:274.67px;background:#f3f4f6"></div>
<div class="t" style="left:790.64px;top:1331.16px;font-size:25.2px;color:#000;font-weight:bold;letter-spacing:-0.130px;">Likelihood 1</div>
<div class="cell" style="left:1008.67px;top:1312px;width:274.67px;background:#bbf7d0;border-radius:12px"></div>
<div class="t" style="left:1139.00px;top:1331.16px;font-size:25.2px;color:#111827;">1</div>
<div class="cell" style="left:1291.33px;top:1312px;width:274.67px;background:#bbf7d0;border-radius:12px"></div>
<div class="t" style="left:1421.66px;top:1331.16px;font-size:25.2px;color:#111827;">2</div>
<div class="cell" style="left:1574.00px;top:1312px;width:274.67px;background:#bbf7d0;border-radius:12px"></div>
<div class="t" style="left:1704.33px;top:1331.16px;font-size:25.2px;color:#111827;">3</div>
<div class="cell" style="left:1856.67px;top:1312px;width:274.67px;background:#bbf7d0;border-radius:12px"></div>
<div class="t" style="left:1987.00px;top:1331.16px;font-size:25.2px;color:#111827;">4</div>
<div class="cell" style="left:2139.33px;top:1312px;width:274.67px;background:#bbf7d0;border-radius:12px"></div>
<div class="t" style="left:2269.66px;top:1331.16px;font-size:25.2px;color:#111827;">5</div>
<div class="abs" style="left:726px;top:1412px;width:32px;height:32px;border-radius:8px;background:#fecaca"></div>
<div class="abs" style="left:950px;top:1412px;width:32px;height:32px;border-radius:8px;background:#fef08a"></div>
<div class="abs" style="left:1192px;top:1412px;width:32px;height:32px;border-radius:8px;background:#bbf7d0"></div>
<div class="t" style="left:773.00px;top:1413.61px;font-size:29.4px;color:#111827;letter-spacing:0.178px;">Hoch</div>
<div class="t" style="left:850.60px;top:1413.61px;font-size:29.4px;color:#111827;letter-spacing:-0.302px;">(≥15)</div>
<div class="t" style="left:997.10px;top:1413.61px;font-size:29.4px;color:#111827;letter-spacing:0.762px;">Mittel</div>
<div class="t" style="left:1077.90px;top:1413.61px;font-size:29.4px;color:#111827;letter-spacing:0.638px;">(8-14)</div>
<div class="t" style="left:1239.10px;top:1413.61px;font-size:29.4px;color:#111827;letter-spacing:0.240px;">Niedrig</div>
<div class="t" style="left:1340.60px;top:1413.61px;font-size:29.4px;color:#111827;letter-spacing:0.768px;">(&lt;8)</div>
<div class="card" style="left:676px;top:1546px;width:574px;height:200px"></div>
<div class="card" style="left:1282px;top:1546px;width:576px;height:200px"></div>
<div class="card" style="left:1890px;top:1546px;width:574px;height:200px"></div>
<div class="abs" style="left:1224px;top:1456px;width:112px;height:112px;border-radius:50%;background:#9333ea;box-shadow:0 8px 20px rgba(0,0,0,0.12)"></div>
<svg class="abs" style="left:1250px;top:1484px" width="56" height="56" viewBox="0 0 56 56">
<defs><linearGradient id="cb" x1="0" y1="0" x2="0" y2="1"><stop offset="0" stop-color="#3a3a3a"/><stop offset="1" stop-color="#151515"/></linearGradient></defs>
<rect x="12" y="30" width="33" height="17" rx="2" fill="url(#cb)"/>
<path d="M14 35.5H43M14 39.5H43M14 43.5H43" stroke="#5a5a5a" stroke-width="1.1"/>
<rect x="11" y="24" width="36" height="7" fill="#262626"/>
<path d="M16 31l5-7h4l-5 7zM27 31l5-7h4l-5 7zM38 31l5-7h3l-5 7z" fill="#e8e8e8"/>
<g transform="rotate(-16 10 22)"><rect x="10" y="15.5" width="38" height="6.5" fill="#262626"/>
<path d="M12 22l5-6.5h4l-5 6.5zM23 22l5-6.5h4l-5 6.5zM34 22l5-6.5h4l-5 6.5z" fill="#e8e8e8"/></g>
<path d="M10 21.5 L15.5 26 L13 30.5 L10.5 29Z" fill="#cfd2d6"/>
</svg>
<div class="abs" style="left:38px;top:1486px;width:76px;height:76px;border-radius:50%;background:#333;border:2px solid #0d0d0d;box-shadow:inset 0 0 0 2px #4d4d4d,0 0 28px rgba(0,0,0,0.10)"></div>
<svg class="abs" style="left:58px;top:1507px" width="36" height="36" viewBox="0 0 36 36">
<defs><linearGradient id="ng" x1="0" y1="0" x2="0" y2="1"><stop offset="0.35" stop-color="#fff"/><stop offset="1" stop-color="#fff" stop-opacity="0"/></linearGradient>
<linearGradient id="nd" gradientUnits="userSpaceOnUse" x1="6" y1="6" x2="30" y2="33"><stop offset="0.6" stop-color="#fff"/><stop offset="1" stop-color="#fff" stop-opacity="0"/></linearGradient></defs>
<rect x="5.6" y="5.9" width="4" height="22.6" fill="#fff"/>
<path d="M5.6 5.9 H9.8 L30.5 31.8 L28 33.5 Z" fill="url(#nd)"/>
<rect x="25.5" y="5.9" width="3.5" height="16" fill="url(#ng)"/>
</svg>
</body></html>
